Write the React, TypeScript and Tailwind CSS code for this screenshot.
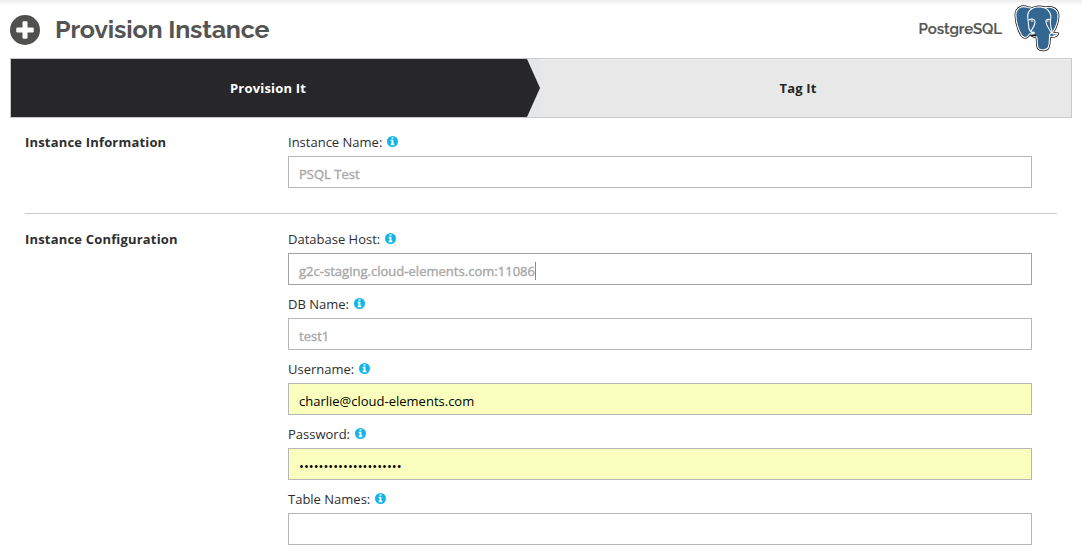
import type { ReactNode } from "react";

function PlusCircle() {
  return (
    <svg viewBox="0 0 1536 1536" className="mt-[3px] size-[30px] shrink-0">
      <circle cx="768" cy="768" r="768" fill="#50504e" />
      <rect x="320" y="640" width="896" height="256" rx="64" fill="#fff" />
      <rect x="640" y="320" width="256" height="896" rx="64" fill="#fff" />
    </svg>
  );
}

function InfoIcon() {
  return (
    <svg viewBox="0 0 1536 1536" className="mb-[3px] ml-[5px] size-[11px] shrink-0">
      <circle cx="768" cy="768" r="768" fill="#12b5ea" />
      <path
        fill="#fff"
        d="M1024 1248v-160q0-14-9-23t-23-9h-96v-512q0-14-9-23t-23-9h-320q-14 0-23 9t-9 23v160q0 14 9 23t23 9h96v320h-96q-14 0-23 9t-9 23v160q0 14 9 23t23 9h448q14 0 23-9t9-23zM896 352v-160q0-14-9-23t-23-9h-192q-14 0-23 9t-9 23v160q0 14 9 23t23 9h192q14 0 23-9t9-23z"
      />
    </svg>
  );
}

const elephant =
  "M68 19C52 12 34 19 32 38C31 58 38 83 49 103C56 113 64 112 70 105L75 99C81 106 88 109 96 109C98 124 96 137 101 144C107 151 127 150 131 140C135 130 134 117 135 108C146 109 156 107 160 99C155 98 147 99 143 97C156 79 163 54 160 38C156 20 136 15 121 20C104 15 87 17 82 22C78 20 73 20 68 19Z";

function PostgresLogo() {
  return (
    <svg viewBox="-1 -1 201 171" className="mt-[2px] h-[56px] w-[66px] shrink-0" strokeLinejoin="round" strokeLinecap="round">
      <path d={elephant} fill="#111" stroke="#111" strokeWidth="8" />
      <path d={elephant} fill="#336791" stroke="#fff" strokeWidth="3.5" />
      <g fill="none" stroke="#fff" strokeWidth="3.2">
        <path d="M82 22C69 29 66 43 69 57C71 70 70 79 73 86C76 93 80 94 83 98" />
        <path d="M121 20C135 28 141 43 138 57C135 68 139 77 143 96" />
        <path d="M71 57C78 53 89 53 90 60C92 72 85 79 78 91" />
        <path d="M138 57C130 53 122 55 124 64C126 76 134 86 141 96" />
        <path d="M75 99C80 101 87 99 89 97C88 94 83 94 80 95" />
        <path d="M135 108C134 101 136 98 141 97" />
        <path d="M79 60h5M127 60h4" />
      </g>
      <path d="M72 101L82 107L94 106L93 102L80 102Z" fill="#111" />
      <path d="M143 102L157 101L149 106Z" fill="#fff" />
    </svg>
  );
}

function Field({ label, children, className = "border-[#b7b7b7]" }: { label: string; children?: ReactNode; className?: string }) {
  return (
    <div className="h-[65px]">
      <div className="flex h-[22px] items-center text-[#2e2e30]">
        <span>{label}</span>
        <InfoIcon />
      </div>
      <div className={`mt-[2px] flex h-8 items-center border pt-[4px] pl-[10px] leading-[18px] ${className}`}>{children}</div>
    </div>
  );
}

export default function App() {
  return (
    <div className="h-[557px] overflow-hidden bg-white font-['Open_Sans',sans-serif] text-[13px]">
      <div className="h-[5px] bg-linear-to-b from-[#ececec] to-white" />
      <header className="-mt-[5px] flex h-[58px] items-center pr-[11px] pb-[2px] pl-[10px] font-['Raleway','Lato',sans-serif] font-bold text-[#545452]">
        <PlusCircle />
        <h1 className="mt-[2px] ml-[15px] text-[25px] leading-[30px] tracking-[-0.17px]">Provision Instance</h1>
        <span className="mt-[3px] mr-[3px] ml-auto text-[15px] font-semibold tracking-[-0.05px] [-webkit-text-stroke:0.2px_#545452]">PostgreSQL</span>
        <PostgresLogo />
      </header>
      <nav className="mx-[10px] flex h-[60px] border border-[#cacaca] bg-[#e8e8e8] font-bold tracking-[0.18px]">
        <div className="relative flex w-[516px] items-center justify-center bg-[#272729] pt-[2px] pr-[2px] text-white">
          Provision It
          <svg viewBox="0 0 14 58" className="absolute top-0 left-full h-[58px] w-[14px]">
            <path d="M0 0H14V58H0Z" fill="#e6e7e9" />
            <path d="M0 0L13 29L0 58Z" fill="#272729" />
          </svg>
        </div>
        <div className="flex flex-1 items-center justify-center border-t border-[#f2f2f2] pr-[2px] text-[#242426]">Tag It</div>
      </nav>
      <main className="mx-[25px] mt-[14px] text-[#2e2e30]">
        <section className="flex h-[82px] border-b border-[#cbcbcb]">
          <h2 className="w-[263px] leading-5 font-bold tracking-[0.18px]">Instance Information</h2>
          <div className="w-[744px]">
            <Field label="Instance Name:">
              <span className="text-[#a9a9a9] [-webkit-text-stroke:0.4px_#a9a9a9]">PSQL Test</span>
            </Field>
          </div>
        </section>
        <section className="flex pt-[15px]">
          <h2 className="w-[263px] leading-5 font-bold tracking-[0.18px]">Instance Configuration</h2>
          <div className="w-[744px]">
            <Field label="Database Host:" className="border-[#a2a2a2]">
              <span className="text-[#a9a9a9] tracking-[0.02px] [-webkit-text-stroke:0.4px_#a9a9a9]">g2c-staging.cloud-elements.com:11086</span>
              <i className="h-[18px] w-px bg-[#888]" />
            </Field>
            <Field label="DB Name:">
              <span className="text-[#a9a9a9] [-webkit-text-stroke:0.4px_#a9a9a9]">test1</span>
            </Field>
            <Field label="Username:" className="border-[#b7b7b7] bg-[#faffbd] text-black">
              charlie@cloud-elements.com
            </Field>
            <Field label="Password:" className="border-[#b7b7b7] bg-[#faffbd] text-black">
              <span>•••••••••••••••••••••</span>
            </Field>
            <Field label="Table Names:" />
          </div>
        </section>
      </main>
    </div>
  );
}
